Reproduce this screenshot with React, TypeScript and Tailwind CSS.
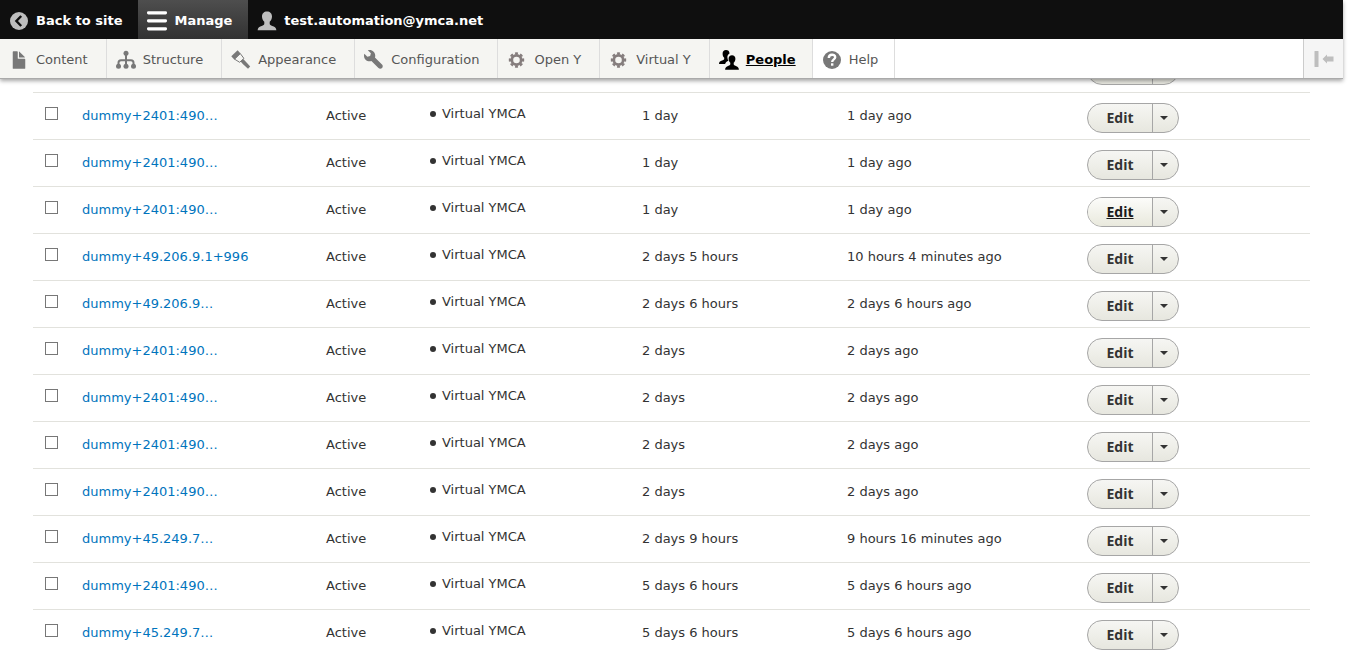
import type { ReactNode } from "react";

type IconProps = { children: ReactNode; className?: string };

function Icon({ children, className = "fill-[#787878]" }: IconProps) {
  return (
    <svg viewBox="0 0 20 20" aria-hidden="true" className={`size-5 shrink-0 ${className}`}>
      {children}
    </svg>
  );
}

const gear = (
  <Icon className="fill-none stroke-[#857d7d]">
    <circle cx="9.500" cy="10" r="4.7" strokeWidth="2.800" />
    <circle
      cx="9.500"
      cy="10"
      r="6.600"
      strokeWidth="2.200"
      pathLength="80"
      strokeDasharray="5.600 4.400"
      strokeDashoffset="2.800"
    />
  </Icon>
);

const icons = {
  back: (
    <Icon className="fill-[#bebebe]">
      <circle cx="10" cy="10" r="9" />
      <path d="M12.2 5 7.4 10l4.8 5" className="fill-none stroke-[#0f0f0f]" strokeWidth="2.4" />
    </Icon>
  ),
  menu: (
    <Icon className="fill-white">
      <rect y="0.2" width="20" height="3.2" rx="1.4" />
      <rect y="8.2" width="20" height="3.2" rx="1.4" />
      <rect y="16.2" width="20" height="3.2" rx="1.4" />
    </Icon>
  ),
  user: (
    <Icon className="fill-[#bebebe]">
      <path d="M10 .4c3 0 5 2 5 5 0 2-.9 4.100-2.300 5.300v2c0 1.200 1 1.700 2.600 2.300 2 .7 3.900 1.300 4.100 4.200H.6c.2-2.900 2.100-3.500 4.100-4.200 1.600-.6 2.600-1.100 2.600-2.300v-2C5.900 9.500 5 7.400 5 5.400c0-3 2-5 5-5z" />
    </Icon>
  ),
  content: (
    <Icon>
      <g transform="scale(1.25)">
        <path d="M12.502 7h-5c-.276 0-.502-.225-.502-.5v-5c0-.275-.225-.5-.5-.5h-3c-.275 0-.5.225-.5.5v13.029c0 .275.225.5.5.5h9.002c.275 0 .5-.225.5-.5v-7.029c0-.275-.225-.5-.5-.5z" />
        <path d="M8.502 6h4c.275 0 .34-.159.146-.354l-4.293-4.292c-.195-.195-.353-.129-.353.146v4c0 .275.225.5.5.5z" />
      </g>
    </Icon>
  ),
  structure: (
    <Icon>
      <path
        d="M10 4v12M2.500 16v-3.200q0-2.500 2.500-2.500h10q2.500 0 2.500 2.500V16"
        className="fill-none stroke-[#787878]"
        strokeWidth="2"
      />
      <circle cx="10" cy="3.200" r="2.500" />
      <circle cx="2.500" cy="16.200" r="2.500" />
      <circle cx="10" cy="16.200" r="2.500" />
      <circle cx="17.500" cy="16.200" r="2.500" />
    </Icon>
  ),
  appearance: (
    <Icon>
      <path d="M.3 6.300 6.600.2l3 3.300-6.200 6.200z" />
      <path
        d="m3.600 9.200 5.700-5.600 3.600 4.800-4.200 3.900z"
        className="fill-[#f5f5f2] stroke-[#787878]"
        strokeWidth="1"
      />
      <path d="m9.600 11.600 2.600-2.700 2.200 2.400 4.800 5.300-2.200 2.200-5.200-4.800z" />
    </Icon>
  ),
  configuration: (
    <Icon>
      <path
        transform="scale(1.25)"
        d="M14.416 11.586l-.01-.008v-.001l-5.656-5.656c.15-.449.252-.921.252-1.421 0-2.485-2.016-4.5-4.502-4.5-.505 0-.981.102-1.434.255l2.431 2.431-.588 2.196-2.196.588-2.445-2.445c-.162.464-.268.956-.268 1.475 0 2.486 2.014 4.5 4.5 4.5.5 0 .972-.102 1.421-.251l5.667 5.665c.781.781 2.047.781 2.828 0s.781-2.047 0-2.828z"
      />
    </Icon>
  ),
  people: (
    <Icon className="fill-black">
      <path d="M7 .1c2 0 3.500 1.200 3.500 3.300C8.500 4.500 8 6.200 8.600 8.700c.2 1 .5 1.500.9 2.100-1.700.8-3 1.500-3.400 3.300H0c0-2.300 1.500-2.900 3-3.500 1.300-.5 2.200-.8 2.200-1.800V7.700C4.200 6.900 3.600 5.500 3.600 3.700 3.600 1.500 4.900.1 7 .1z" />
      <path d="M13 5.200c2.100 0 3.400 1.400 3.400 3.600 0 1.600-.6 3.100-1.700 4v1.200c0 1 .9 1.400 2.200 1.900 1.500.6 3 1.200 3 3.800H6.100c0-2.600 1.500-3.200 3-3.800 1.300-.5 2.200-.9 2.200-1.900v-1.200c-1.100-.9-1.700-2.400-1.700-4 0-2.200 1.300-3.600 3.400-3.600z" />
    </Icon>
  ),
  help: (
    <Icon>
      <circle cx="10" cy="10" r="9" />
      <path
        d="M6.800 8c0-4.200 6.400-4.200 6.400-.7 0 2.200-3 2-3 4.600"
        className="fill-none stroke-white"
        strokeWidth="2.400"
      />
      <rect x="9" y="13.300" width="2.400" height="2.400" className="fill-white" />
    </Icon>
  ),
};

const normalItem = "bg-[#f5f5f2] pr-[18px]";

const trayItems = [
  { label: "Content", icon: icons.content, style: normalItem },
  { label: "Structure", icon: icons.structure, style: normalItem },
  { label: "Appearance", icon: icons.appearance, style: normalItem },
  { label: "Configuration", icon: icons.configuration, style: normalItem },
  { label: "Open Y", icon: gear, style: normalItem },
  { label: "Virtual Y", icon: gear, style: normalItem },
  { label: "People", icon: icons.people, style: "bg-[#f5f5f2] pr-4 font-bold text-black underline" },
  { label: "Help", icon: icons.help, style: "bg-white pr-4" },
];

const users = [
  { name: "dummy+2401:490…", member: "1 day", access: "1 day ago" },
  { name: "dummy+2401:490…", member: "1 day", access: "1 day ago" },
  { name: "dummy+2401:490…", member: "1 day", access: "1 day ago", hovered: true },
  { name: "dummy+49.206.9.1+996", member: "2 days 5 hours", access: "10 hours 4 minutes ago" },
  { name: "dummy+49.206.9…", member: "2 days 6 hours", access: "2 days 6 hours ago" },
  { name: "dummy+2401:490…", member: "2 days", access: "2 days ago" },
  { name: "dummy+2401:490…", member: "2 days", access: "2 days ago" },
  { name: "dummy+2401:490…", member: "2 days", access: "2 days ago" },
  { name: "dummy+2401:490…", member: "2 days", access: "2 days ago" },
  { name: "dummy+45.249.7…", member: "2 days 9 hours", access: "9 hours 16 minutes ago" },
  { name: "dummy+2401:490…", member: "5 days 6 hours", access: "5 days 6 hours ago" },
  { name: "dummy+45.249.7…", member: "5 days 6 hours", access: "5 days 6 hours ago" },
];

function Toolbar() {
  const barLink = "flex items-center gap-[7px] pl-[9px]";
  return (
    <header className="relative z-10 shadow-[0_2px_4px_rgba(0,0,0,0.35)]">
      <nav aria-label="Toolbar" className="flex h-[39px] bg-[#0f0f0f] font-bold text-white">
        <a href="#site" className={`${barLink} pt-0.5 pr-4`}>
          {icons.back}
          Back to site
        </a>
        <a href="#manage" className={`${barLink} bg-linear-to-b from-[#4e4e4e] to-[#323232] pt-0.5 pr-4`}>
          {icons.menu}
          Manage
        </a>
        <a href="#account" className={`${barLink} pt-0.5 pr-4`}>
          {icons.user}
          test.automation@ymca.net
        </a>
      </nav>
      <nav aria-label="Administration" className="flex h-10 border-b border-[#aaaaaa] bg-white text-[#565656]">
        {trayItems.map((item) => (
          <a
            key={item.label}
            href="#section"
            className={`${barLink} border-r border-[#dddddd] pt-0.5 ${item.style}`}
          >
            {item.icon}
            {item.label}
          </a>
        ))}
        <button
          type="button"
          aria-label="Vertical orientation"
          className="ml-auto flex w-10 items-center justify-center border-l border-[#cccccc] bg-[#f5f5f5]"
        >
          <Icon className="fill-[#bebebe]">
            <rect x="0.500" y="2" width="4" height="16" rx="0.500" />
            <path d="m8.500 10 4.500-4.500v2h6.500v5H13v2z" />
          </Icon>
        </button>
      </nav>
    </header>
  );
}

function Operations({ label, hovered }: { label?: string; hovered?: boolean }) {
  return (
    <div className="flex h-[30px] w-[92px] overflow-hidden rounded-full border border-[#a6a6a6] bg-linear-to-b from-[#f6f6f3] to-[#e7e7df]">
      <button
        type="button"
        className={`flex-1 font-['Open_Sans',sans-serif] text-sm font-bold ${
          hovered ? "bg-linear-to-b from-[#fcfcfa] to-[#e9e9dd] text-[#1a1a1a] underline" : "text-[#333333]"
        }`}
      >
        {label}
      </button>
      <button
        type="button"
        aria-label="List additional actions"
        className="flex w-[26px] items-center justify-center border-l border-[#a6a6a6] pr-[3px]"
      >
        <svg viewBox="0 0 8 4" className="h-1 w-2 fill-[#333333]" aria-hidden="true">
          <path d="M0 0h8L4 4z" />
        </svg>
      </button>
    </div>
  );
}

export default function App() {
  return (
    <div className="flex h-screen flex-col bg-white pr-[17px] font-['DejaVu_Sans',sans-serif] text-[13px] leading-5">
      <Toolbar />
      <main className="min-h-0 flex-1 overflow-hidden px-[33px] text-[#333333]">
        <table className="-mt-[34px] w-full table-fixed">
          <colgroup>
            <col className="w-[37px]" />
            <col className="w-[244px]" />
            <col className="w-[104px]" />
            <col className="w-[212px]" />
            <col className="w-[205px]" />
            <col className="w-[240px]" />
            <col className="w-[235px]" />
          </colgroup>
          <tbody>
            <tr className="h-[47px] border-b border-[#e2e2dd]">
              <td colSpan={6} />
              <td className="pt-[3px] pl-3">
                <Operations />
              </td>
            </tr>
            {users.map((user, index) => (
              <tr key={index} className="h-[47px] border-b border-[#e2e2dd]">
                <td className="pb-[5px] pl-3">
                  <input
                    type="checkbox"
                    aria-label={`Select ${user.name}`}
                    className="block size-[13px] appearance-none border border-[#777777] bg-white"
                  />
                </td>
                <td className="pl-3">
                  <a href="#user" className="text-[#0074bd]">
                    {user.name}
                  </a>
                </td>
                <td className="pl-3">Active</td>
                <td className="pb-[3px] pl-3">
                  <ul>
                    <li className="flex items-center gap-[6px]">
                      <span className="size-[6px] rounded-full bg-[#333333]" />
                      Virtual YMCA
                    </li>
                  </ul>
                </td>
                <td className="pl-3">{user.member}</td>
                <td className="pl-3">{user.access}</td>
                <td className="pt-1 pl-3">
                  <Operations label="Edit" hovered={user.hovered} />
                </td>
              </tr>
            ))}
          </tbody>
        </table>
      </main>
    </div>
  );
}
